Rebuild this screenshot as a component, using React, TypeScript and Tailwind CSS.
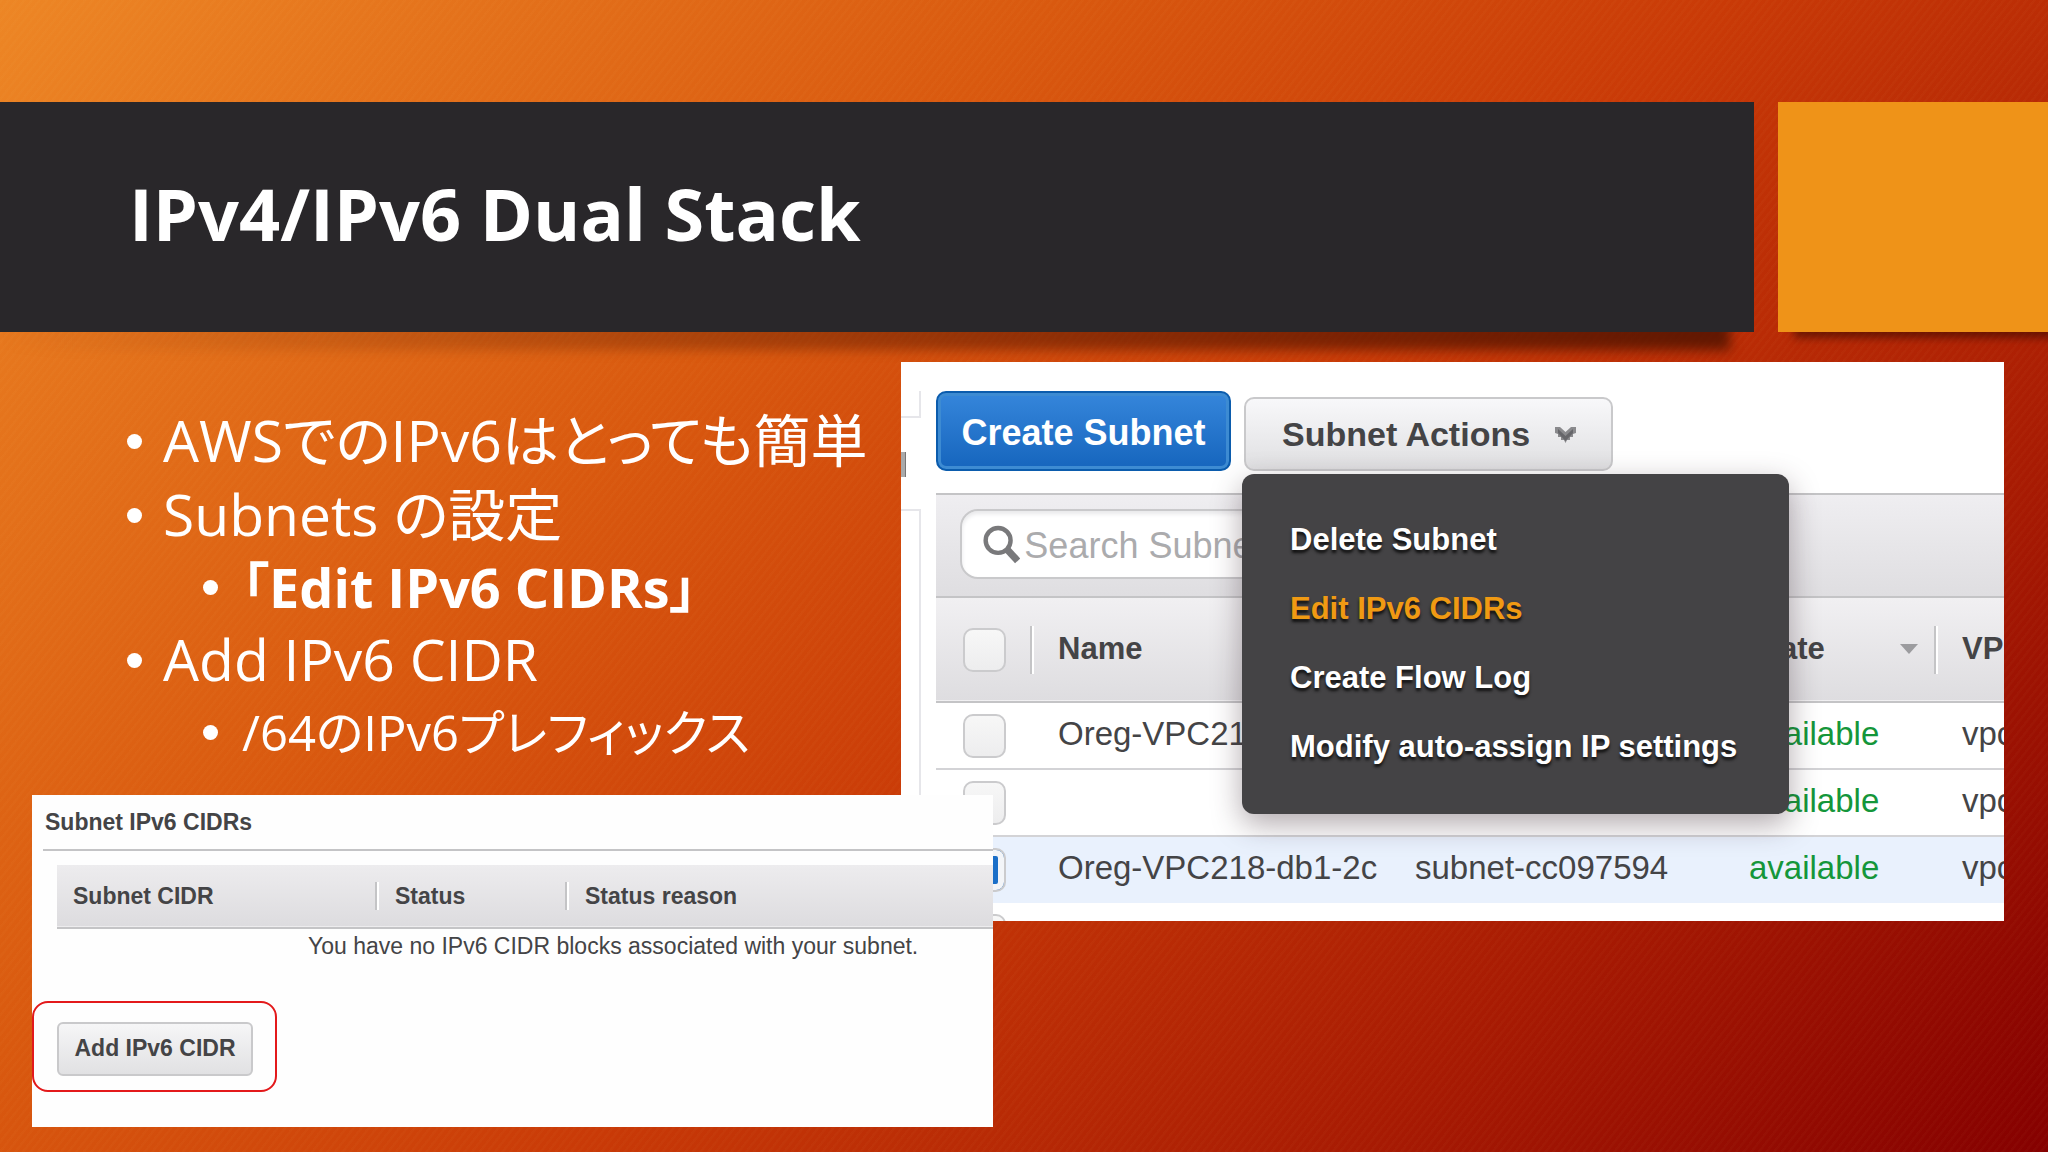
import { useState } from 'react';
import type { ReactNode } from 'react';

interface Subnet {
  name: string;
  id: string;
  state: string;
  vpc: string;
}

const subnets: Subnet[] = [
  { name: 'Oreg-VPC218', id: '', state: 'available', vpc: 'vpc-' },
  { name: '', id: '', state: 'available', vpc: 'vpc-' },
  { name: 'Oreg-VPC218-db1-2c', id: 'subnet-cc097594', state: 'available', vpc: 'vpc-' },
  { name: '', id: '', state: '', vpc: '' },
];

const actions = ['Delete Subnet', 'Edit IPv6 CIDRs', 'Create Flow Log', 'Modify auto-assign IP settings'];

function Bullet({ sub, children }: { sub?: boolean; children: ReactNode }) {
  return (
    <li className={sub ? 'flex items-center h-[71px] pl-[171px] text-[49px]' : 'flex items-center h-[74px] pl-[95px] text-[57px]'}>
      <span className={sub ? 'mr-6 size-[15px] shrink-0 rounded-full bg-white' : 'mr-[21px] size-[15px] shrink-0 rounded-full bg-white'} />
      <span className="whitespace-nowrap">{children}</span>
    </li>
  );
}

function Check({ label, checked, onChange }: { label: string; checked: boolean; onChange: () => void }) {
  return (
    <input
      type="checkbox"
      aria-label={label}
      checked={checked}
      onChange={onChange}
      className="block h-11 w-[43px] appearance-none rounded-[10px] border-2 border-[#cbcbcd] bg-linear-to-b from-[#f7f7f7] to-[#ededee] checked:bg-[#1b6fc8] checked:bg-none checked:shadow-[inset_0_0_0_6px_#f3f5f8]"
    />
  );
}

function HeadCell({ children }: { children?: ReactNode }) {
  return (
    <div className="flex h-12 items-center border-l-2 border-[#c4c4c6] pl-[26px] shadow-[inset_2px_0_0_#fff]">
      {children}
    </div>
  );
}

function ActionsMenu() {
  const [open, setOpen] = useState(true);

  return (
    <div className="relative">
      <button
        onClick={() => setOpen(!open)}
        className="flex h-[74px] w-[369px] items-center gap-6 rounded-[10px] border-2 border-[#c9c9cb] bg-linear-to-b from-[#f8f8fa] to-[#e0e0e2] pl-9 text-[34px] font-bold text-[#444446]"
      >
        Subnet Actions
        <svg width="23" height="17" viewBox="0 0 23 17">
          <path d="M1 1h5l5.500 5L17 1h5v6l-3 1v3h-3v3h-3l-1.500 3L10 14H7v-3H4V8L1 7z" fill="#8a8a8d" />
          <path d="M4 3l7.500 7L19 3v4l-7.500 8L4 7z" fill="#66666a" />
        </svg>
      </button>
      {open && (
        <ul className="absolute -left-[2px] top-[77px] z-10 w-[547px] rounded-xl bg-[#444345] px-12 py-8 shadow-[0_10px_30px_rgba(60,40,50,0.4)]">
          {actions.map((a) => (
            <li key={a} className="flex h-[69px] items-center">
              <button
                className={
                  a === 'Edit IPv6 CIDRs'
                    ? 'whitespace-nowrap text-[31px] font-bold text-[#f09a13] [text-shadow:0_3px_3px_#111]'
                    : 'whitespace-nowrap text-[31px] font-bold text-white [text-shadow:0_3px_3px_#111]'
                }
              >
                {a}
              </button>
            </li>
          ))}
        </ul>
      )}
    </div>
  );
}

function SubnetList() {
  const [selected, setSelected] = useState<number[]>([2]);

  const toggle = (i: number) =>
    setSelected(selected.includes(i) ? selected.filter((s) => s !== i) : [...selected, i]);

  return (
    <section className="col-start-3 col-end-5 row-start-1 row-end-3 flex min-h-0 min-w-0 overflow-hidden bg-white font-['Liberation_Sans',sans-serif] text-[#444446]">
      {/* Edge of the navigation pane */}
      <div className="flex w-5 shrink-0 flex-col pt-[29px]">
        <div className="h-[27px] border-r-2 border-b-2 border-[#e6e6ea]" />
        <div className="mt-[34px] h-[25px] w-[5px] border-r border-[#777] bg-[#aaa]" />
        <div className="mt-8 grow border-t-2 border-r-2 border-[#e6e6ea]" />
      </div>

      <div className="ml-[15px] min-w-0 grow">
        <div className="flex h-[131px] items-end gap-[13px] pb-[22px]">
          <button className="h-20 w-[295px] rounded-[10px] border-2 border-[#0b5cad] bg-linear-to-b from-[#3586db] to-[#1565bd] pt-1 text-[36px] font-bold text-white shadow-[inset_0_0_0_3px_#3d8bd2]">
            Create Subnet
          </button>
          <ActionsMenu />
        </div>

        <div className="h-[105px] border-y-2 border-[#c4c4c6] bg-linear-to-b from-[#efeef1] to-[#dfdee1] px-6 pt-[14px]">
          <label className="flex h-[70px] w-[480px] items-center gap-1 rounded-[18px] border-2 border-[#c9c9cb] bg-white pl-[21px] shadow-[inset_0_3px_4px_#e8e8ea]">
            <svg width="42" height="42" viewBox="0 0 42 42" fill="none" stroke="#79797b">
              <circle cx="17" cy="17" r="14" strokeWidth="5" />
              <path d="M27 27l12 13" strokeWidth="8" />
            </svg>
            <input
              aria-label="Search Subnets"
              placeholder="Search Subnets"
              className="min-w-0 grow bg-transparent pt-1 text-[36px] outline-none placeholder:text-[#ababad]"
            />
          </label>
        </div>

        <table className="w-full table-fixed border-collapse text-left whitespace-nowrap">
          <thead>
            <tr className="h-[104px] border-b-2 border-[#c4c4c6] bg-linear-to-b from-[#f1f0f2] to-[#dedde0] text-[31px]">
              <th className="w-[94px] pl-[27px]">
                <Check label="Select all" checked={false} onChange={() => setSelected([0, 1, 2, 3])} />
              </th>
              <th className="w-[357px] p-0"><HeadCell>Name</HeadCell></th>
              <th className="w-[334px] p-0"><HeadCell /></th>
              <th className="w-[213px] p-0">
                <HeadCell>
                  State
                  <svg className="mr-4 ml-auto" width="18" height="11" viewBox="0 0 18 11">
                    <path d="M0 0h18L9 10z" fill="#9c9c9f" />
                  </svg>
                </HeadCell>
              </th>
              <th className="overflow-hidden p-0"><HeadCell>VPC</HeadCell></th>
            </tr>
          </thead>
          <tbody className="text-[33px]">
            {subnets.map((s, i) => (
              <tr
                key={i}
                className={selected.includes(i) ? 'h-[67px] bg-[#e9f1fd]' : 'h-[67px] border-b-2 border-[#d3d3d6]'}
              >
                <td className="p-0 pl-[27px]">
                  <Check label={s.name || 'Subnet'} checked={selected.includes(i)} onChange={() => toggle(i)} />
                </td>
                <td className="p-0 pb-1 pl-7">{s.name}</td>
                <td className="p-0 pb-1 pl-7">{s.id}</td>
                <td className="p-0 pb-1 pl-7 text-[#14963a]">{s.state}</td>
                <td className="overflow-hidden p-0 pb-1 pl-7">{s.vpc}</td>
              </tr>
            ))}
          </tbody>
        </table>
      </div>
    </section>
  );
}

function CidrPanel() {
  return (
    <section className="z-20 col-start-2 col-end-4 row-start-2 row-end-4 min-w-0 overflow-hidden bg-[#fefefe] font-['Liberation_Sans',sans-serif] text-[23px] text-[#444446]">
      <h2 className="ml-[11px] flex h-14 items-center border-b-2 border-[#c4c4c6] pl-[2px] font-bold">Subnet IPv6 CIDRs</h2>
      <table className="mt-[14px] ml-[25px] w-[calc(100%-25px)] table-fixed border-collapse text-left">
        <thead>
          <tr className="h-[63px] border-b-2 border-[#c4c4c6] bg-linear-to-b from-[#edecee] to-[#dddcdf]">
            <th className="w-[318px] p-0 pl-4">Subnet CIDR</th>
            <th className="w-[190px] p-0">
              <div className="border-l-2 border-[#c4c4c6] pl-[18px] leading-7 shadow-[inset_2px_0_0_#fff]">Status</div>
            </th>
            <th className="p-0">
              <div className="border-l-2 border-[#c4c4c6] pl-[18px] leading-7 shadow-[inset_2px_0_0_#fff]">Status reason</div>
            </th>
          </tr>
        </thead>
        <tbody>
          <tr>
            <td colSpan={3} className="h-9 p-0 pl-[251px] whitespace-nowrap">
              You have no IPv6 CIDR blocks associated with your subnet.
            </td>
          </tr>
        </tbody>
      </table>
      {/* Highlighted button */}
      <div className="mt-[37px] flex h-[91px] w-[245px] items-center rounded-[16px] border-2 border-[#e3191b] pt-1 pl-[23px]">
        <button className="h-[54px] w-[196px] rounded-md border-2 border-[#c9c9cb] bg-linear-to-b from-[#f6f6f7] to-[#e1e1e3] font-bold whitespace-nowrap">
          Add IPv6 CIDR
        </button>
      </div>
    </section>
  );
}

export default function App() {
  return (
    <main className="isolate min-h-screen overflow-hidden bg-[repeating-linear-gradient(128deg,rgba(255,230,150,0.025)_0px,rgba(255,230,150,0.025)_2px,transparent_3px,transparent_6px),linear-gradient(135deg,#ed8625_0%,#d9590f_33%,#c93a07_54%,#a81b03_78%,#850000_100%)] pt-[102px] font-['Open_Sans','Noto_Sans_CJK_JP',sans-serif] text-white">
      <header className="flex h-[230px] gap-6">
        <div className="relative flex grow items-center bg-[#29272a] pl-[129px]">
          <h1 className="pb-2 text-[72px] font-bold whitespace-nowrap">IPv4/IPv6 Dual Stack</h1>
          {/* Shadow fades out towards the left */}
          <div className="absolute right-6 -bottom-[18px] left-0 -z-10 h-9 bg-linear-to-r from-transparent to-[#4a1200]/80 blur-[6px]" />
        </div>
        <div className="w-[270px] shrink-0 bg-[#ef9318] shadow-[12px_10px_8px_-4px_rgba(60,10,0,0.6)]" />
      </header>

      <div className="mt-[30px] grid grid-cols-[32px_869fr_92px_1011fr_44px] grid-rows-[433px_126px_206px]">
        <ul className="col-start-2 row-start-1 pt-[42px] [font-feature-settings:'palt']">
          <Bullet>AWSでのIPv6はとっても簡単</Bullet>
          <Bullet>Subnets の設定</Bullet>
          <Bullet sub>
            <b className="text-[54px]">「Edit IPv6 CIDRs」</b>
          </Bullet>
          <Bullet>Add IPv6 CIDR</Bullet>
          <Bullet sub>/64のIPv6プレフィックス</Bullet>
        </ul>
        <SubnetList />
        <CidrPanel />
      </div>
    </main>
  );
}
